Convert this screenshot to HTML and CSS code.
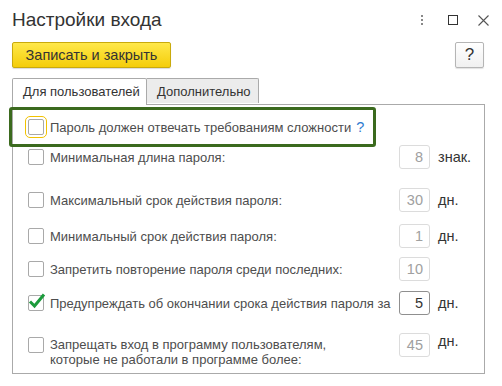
FILE: index.html
```html
<!DOCTYPE html>
<html lang="ru">
<head>
    <meta charset="UTF-8">
    <title>Настройки входа</title>
    <link rel="stylesheet" href="styles.css">
</head>
<body>
<div class="okno">
    <div class="zagolovok">
        <h1>Настройки входа</h1>
        <div class="knopki-okna">
            <span class="tochki"><i></i><i></i><i></i></span>
            <span class="razvernut"></span>
            <svg class="zakryt" width="11" height="11" viewBox="0 0 11 11">
                <path d="M0.5 0.5 L10.5 10.5 M10.5 0.5 L0.5 10.5" stroke="#555" stroke-width="1.1"/>
            </svg>
        </div>
    </div>

    <div class="panel-komand">
        <button class="knopka-osnovnaya">Записать и закрыть</button>
        <button class="knopka-spravka">?</button>
    </div>

    <div class="zakladki">
        <div class="zakladka aktivnaya">Для пользователей</div>
        <div class="zakladka">Дополнительно</div>
    </div>

    <div class="stranica">
        <div class="stroka fokus">
            <span class="flazhok vybran"></span>
            <span class="nadpis">Пароль должен отвечать требованиям сложности</span>
            <span class="vopros">?</span>
        </div>

        <div class="stroka otstup-6">
            <span class="flazhok"></span>
            <span class="nadpis">Минимальная длина пароля:</span>
            <span class="pole">8</span>
            <span class="edinica">знак.</span>
        </div>

        <div class="stroka otstup-19">
            <span class="flazhok"></span>
            <span class="nadpis">Максимальный срок действия пароля:</span>
            <span class="pole">30</span>
            <span class="edinica">дн.</span>
        </div>

        <div class="stroka otstup-12">
            <span class="flazhok"></span>
            <span class="nadpis">Минимальный срок действия пароля:</span>
            <span class="pole">1</span>
            <span class="edinica">дн.</span>
        </div>

        <div class="stroka otstup-9">
            <span class="flazhok"></span>
            <span class="nadpis">Запретить повторение пароля среди последних:</span>
            <span class="pole">10</span>
            <span class="edinica"></span>
        </div>

        <div class="stroka otstup-10">
            <span class="flazhok otmechen">
                <svg width="18" height="16" viewBox="0 0 18 16">
                    <path d="M2 8.5 L6.5 13 L16 1.5" fill="none" stroke="#1c9b3c" stroke-width="3"/>
                </svg>
            </span>
            <span class="nadpis">Предупреждать об окончании срока действия пароля за</span>
            <span class="pole aktivnoe">5</span>
            <span class="edinica">дн.</span>
        </div>

        <div class="stroka dvuh-strochnaya otstup-18">
            <span class="flazhok"></span>
            <span class="nadpis">Запрещать вход в программу пользователям,<br>которые не работали в программе более:</span>
            <span class="pole">45</span>
            <span class="edinica">дн.</span>
        </div>
    </div>
</div>
</body>
</html>
```

FILE: styles.css
```css
body {
    margin: 0;
    font-family: "Liberation Sans", Arial, sans-serif;
    font-size: 13px;
    color: #4d4d4d;
    background: #fff;
}
.okno {
    width: 502px;
    height: 386px;
}
.zagolovok {
    display: flex;
    justify-content: space-between;
    align-items: center;
    height: 40px;
    padding: 0 13px 0 12px;
}
h1 {
    margin: 0;
    font-size: 19px;
    font-weight: normal;
    color: #333;
}
.knopki-okna {
    display: flex;
    align-items: center;
    gap: 20px;
}
.tochki {
    display: flex;
    flex-direction: column;
    gap: 2px;
    margin-right: 5px;
}
.tochki i {
    width: 2px;
    height: 2px;
    background: #888;
}
.razvernut {
    width: 8px;
    height: 8px;
    border: 1.5px solid #333;
}
.panel-komand {
    display: flex;
    justify-content: space-between;
    padding: 2px 18px 0 12px;
}
.knopka-osnovnaya {
    width: 159px;
    height: 26px;
    font-family: inherit;
    font-size: 14.5px;
    color: #333;
    background: linear-gradient(#ffe84a, #f4cd0a);
    border: 1px solid #c9aa0c;
    border-radius: 2px;
    box-shadow: 0 1px 1px rgba(0, 0, 0, 0.15);
}
.knopka-spravka {
    width: 29px;
    height: 26px;
    font-family: inherit;
    font-size: 17px;
    color: #333;
    background: linear-gradient(#fff, #f0f0f0);
    border: 1px solid #b5b5b5;
    border-radius: 2px;
    box-shadow: 0 1px 1px rgba(0, 0, 0, 0.12);
}
.zakladki {
    display: flex;
    margin: 10px 0 0 12px;
}
.zakladka {
    width: 112px;
    height: 25px;
    box-sizing: border-box;
    line-height: 25px;
    padding-left: 10px;
    white-space: nowrap;
    color: #333;
    background: #ececec;
    border: 1px solid #aaa;
    border-bottom: none;
    border-left: none;
    border-radius: 0 2px 0 0;
}
.zakladka.aktivnaya {
    width: 135px;
    height: 27px;
    margin-bottom: -1px;
    background: #fff;
    border-left: 1px solid #aaa;
    border-radius: 2px 2px 0 0;
    position: relative;
}
.stranica {
    width: 473px;
    margin-left: 12px;
    padding: 10px 9px 6px 15px;
    box-sizing: border-box;
    border: 1px solid #aaa;
}
.stroka {
    display: flex;
    align-items: center;
    height: 24px;
}
.stroka.fokus {
    display: inline-flex;
    position: relative;
}
.stroka.fokus::before {
    content: "";
    position: absolute;
    left: -19px;
    right: -12px;
    top: -8px;
    bottom: -8px;
    border: 3px solid #3b6a1e;
    border-radius: 3px;
}
.otstup-6 { margin-top: 6px; }
.otstup-9 { margin-top: 9px; }
.otstup-10 { margin-top: 10px; }
.otstup-12 { margin-top: 12px; }
.otstup-18 { margin-top: 18px; }
.otstup-19 { margin-top: 19px; }
.flazhok {
    flex: none;
    position: relative;
    width: 14px;
    height: 14px;
    margin-right: 6px;
    border: 1px solid #a9a9a9;
    border-radius: 2px;
    background: #fff;
}
.flazhok.vybran {
    outline: 1px solid #f2c200;
    outline-offset: 2px;
}
.flazhok svg {
    position: absolute;
    left: -1px;
    top: -3px;
}
.nadpis {
    flex: 1;
    line-height: 15px;
}
.vopros {
    margin-left: 5px;
    color: #2f7bd0;
    font-size: 14.5px;
}
.pole {
    flex: none;
    width: 31px;
    height: 24px;
    box-sizing: border-box;
    padding-right: 6px;
    line-height: 22px;
    text-align: right;
    font-size: 14.5px;
    color: #a0a0a0;
    border: 1px solid #dcdcdc;
    border-radius: 3px;
}
.pole.aktivnoe {
    color: #333;
    border-color: #8f8f8f;
}
.edinica {
    flex: none;
    width: 37px;
    margin-left: 8px;
    color: #333;
    font-size: 14.5px;
}
.dvuh-strochnaya {
    height: auto;
    align-items: flex-start;
}
.dvuh-strochnaya .flazhok {
    margin-top: 4px;
}
.dvuh-strochnaya .nadpis {
    padding-top: 4px;
}
```
